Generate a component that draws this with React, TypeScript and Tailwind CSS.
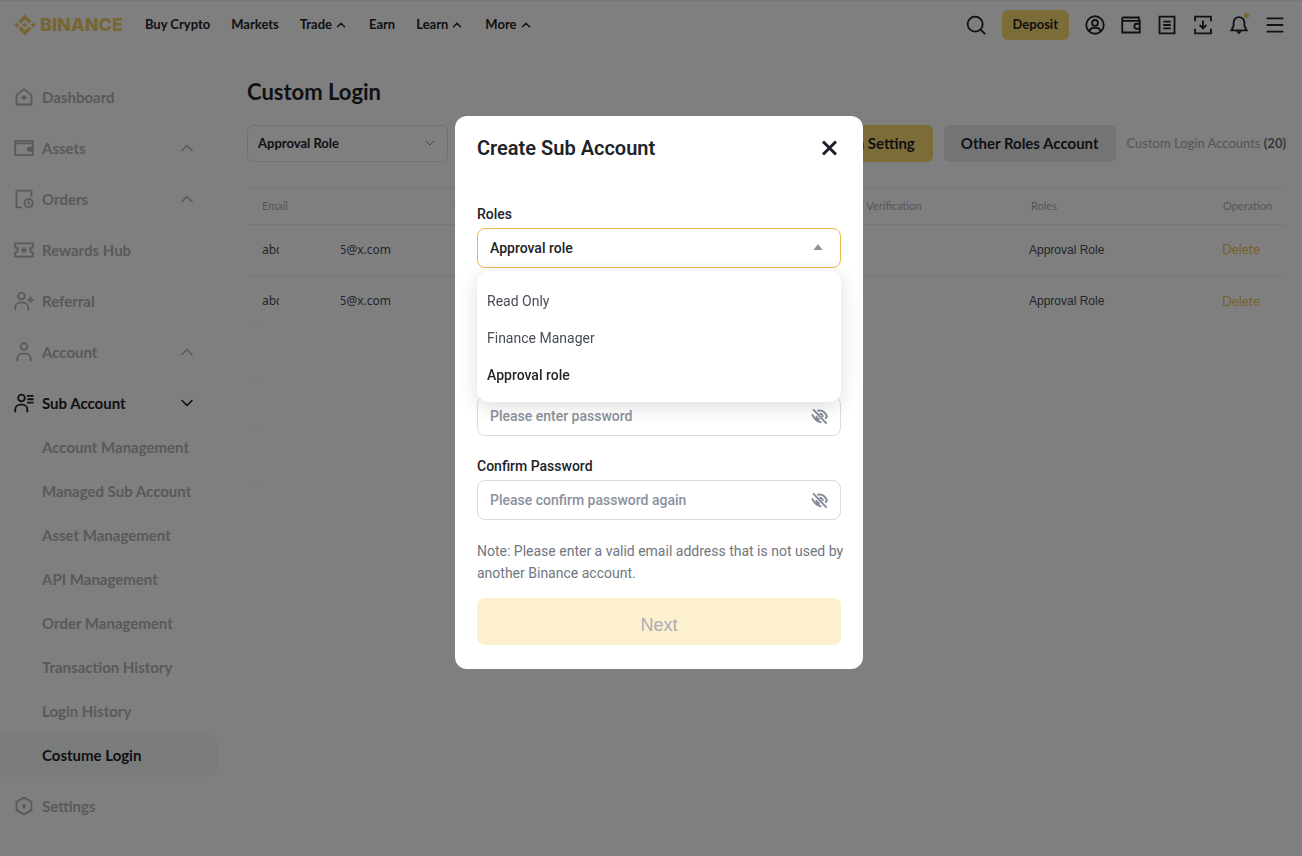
import { useState } from "react";
import type { ReactNode } from "react";
import { ChevronDown, ChevronUp } from "lucide-react";

function Svg({ children, className = "size-5" }: { children: ReactNode; className?: string }) {
  return (
    <svg
      viewBox="0 0 24 24"
      fill="none"
      stroke="currentColor"
      strokeWidth="2.2"
      className={`shrink-0 ${className}`}
      aria-hidden="true"
    >
      {children}
    </svg>
  );
}

const icons = {
  home: (
    <Svg>
      <path d="M3 10l9-7.5L21 10v11H3z" strokeLinejoin="round" />
      <path d="M12 9.500l3.300 3.300-3.300 3.300-3.300-3.300z" fill="currentColor" stroke="none" />
    </Svg>
  ),
  wallet: (
    <Svg>
      <path d="M1.500 3.500h21v17h-21zM1.500 6.500h21" />
      <path d="M22 10.500h-3.500a3 3 0 0 0 0 6H22z" fill="currentColor" stroke="none" />
    </Svg>
  ),
  orders: (
    <Svg>
      <path d="M9.500 22H3V2h18v7.500M3 2v20" />
      <circle cx="17.5" cy="17" r="5" />
      <path d="M17.300 14v3.300l2 1.200" strokeWidth="1.8" />
    </Svg>
  ),
  ticket: (
    <Svg>
      <path d="M1.500 4h21v5a3 3 0 0 0 0 6v5h-21v-5a3 3 0 0 0 0-6z" />
      <path
        d="M12 7.500l1.300 3 3.200.3-2.400 2.100.7 3.100-2.800-1.600-2.800 1.600.7-3.100-2.400-2.100 3.200-.3z"
        fill="currentColor"
        stroke="none"
      />
    </Svg>
  ),
  referral: (
    <Svg>
      <circle cx="9" cy="6" r="4" />
      <path d="M1.500 23v-3a6 6 0 0 1 6-6h3.500a6 6 0 0 1 6 6v3M16 10.500h7.500M19.800 6.800v7.500" />
    </Svg>
  ),
  user: (
    <Svg>
      <circle cx="12" cy="5.500" r="4" />
      <path d="M4 23v-3a6 6 0 0 1 6-6h4a6 6 0 0 1 6 6v3" />
    </Svg>
  ),
  subUser: (
    <Svg>
      <circle cx="9" cy="6" r="4" />
      <path d="M1.500 23v-3a6 6 0 0 1 6-6H10a6 6 0 0 1 6 6v3M15.500 3.500h8M16 7.500h7.500M15.500 11.500h8" />
    </Svg>
  ),
  settings: (
    <Svg>
      <path d="M12 2l9 5v10l-9 5-9-5V7z" strokeLinejoin="round" />
      <path d="M12 9l3 3-3 3-3-3z" fill="currentColor" stroke="none" />
    </Svg>
  ),
};

const menu = [
  { label: "Dashboard", icon: icons.home },
  { label: "Assets", icon: icons.wallet, expandable: true },
  { label: "Orders", icon: icons.orders, expandable: true },
  { label: "Rewards Hub", icon: icons.ticket },
  { label: "Referral", icon: icons.referral },
  { label: "Account", icon: icons.user, expandable: true },
];

const subMenu = [
  "Account Management",
  "Managed Sub Account",
  "Asset Management",
  "API Management",
  "Order Management",
  "Transaction History",
  "Login History",
  "Costume Login",
];

const nav = [
  { label: "Buy Crypto" },
  { label: "Markets" },
  { label: "Trade", arrow: true },
  { label: "Earn" },
  { label: "Learn", arrow: true },
  { label: "More", arrow: true },
];

const roles = ["Read Only", "Finance Manager", "Approval role"];

function Header() {
  return (
    <header className="flex h-[49px] items-center border-t border-[#eaecef] pr-[17px] pl-3.5 text-[#1e2329]">
      <a href="#" className="flex items-center gap-1 text-[#efcd66]">
        <svg viewBox="0 0 24 24" fill="currentColor" className="size-[22px]" aria-hidden="true">
          <path d="M12 .5l7.300 7.300-2.800 2.800L12 6.100l-4.500 4.500-2.800-2.800z" />
          <path d="M12 23.500l7.300-7.300-2.800-2.800-4.500 4.500-4.500-4.500-2.800 2.800z" />
          <path d="M12 9.200l2.800 2.800-2.800 2.800L9.200 12zM2.800 9.200L5.600 12l-2.800 2.800L0 12zM21.200 9.200L24 12l-2.800 2.800-2.800-2.800z" />
        </svg>
        <span className="font-[Inter,sans-serif] text-lg font-extrabold">BINANCE</span>
      </a>
      <nav className="ml-[22px] flex items-center gap-[21px] text-[13px] font-bold">
        {nav.map((item) => (
          <a key={item.label} href="#" className="flex items-center gap-0.5">
            {item.label}
            {item.arrow && <ChevronUp size={14} strokeWidth={2.5} />}
          </a>
        ))}
      </nav>
      <div className="ml-auto flex items-center gap-4">
        <button aria-label="Search">
          <Svg>
            <circle cx="11" cy="11" r="9" />
            <path d="M17.500 17.500L23 23" />
          </Svg>
        </button>
        <button className="h-[30px] rounded-md bg-[#f8d870] px-[11px] text-[13px] font-bold">Deposit</button>
        <button aria-label="Profile">
          <Svg>
            <circle cx="12" cy="12" r="10.500" />
            <circle cx="12" cy="9.500" r="3.500" />
            <path d="M5.500 19.500c.5-3 2-4 4.500-4h4c2.500 0 4 1 4.500 4" />
          </Svg>
        </button>
        <button aria-label="Wallet">
          <Svg>
            <path d="M1.500 3h20v3.500M1.500 3v18h21V7h-21" />
            <path d="M22 10.500h-3a3 3 0 0 0 0 6h3" />
          </Svg>
        </button>
        <button aria-label="Orders">
          <Svg>
            <path d="M3 2h18v20H3zM7.500 8h9M7.500 12h9M7.500 16h9" />
          </Svg>
        </button>
        <button aria-label="Downloads">
          <Svg>
            <path d="M2.500 7.500V2h19v5.500M2.500 16.500V22h19v-5.500M12 6.500v9M8 12l4 4 4-4" />
          </Svg>
        </button>
        <button aria-label="Notifications" className="relative">
          <Svg>
            <path d="M1.500 18.500h21M4 18.500v-3l1.500-2V9a6.500 6.500 0 0 1 13 0v4.500l1.500 2v3" strokeLinejoin="round" />
            <path d="M8.500 19.500h7L12 23z" fill="currentColor" stroke="none" />
          </Svg>
          <span className="absolute -top-0.5 right-0 size-[5px] rounded-full bg-[#efc95a]" />
        </button>
        <button aria-label="Menu">
          <Svg>
            <path d="M2 4h20M2 12h20M2 20h20" />
          </Svg>
        </button>
      </div>
    </header>
  );
}

function Sidebar() {
  const item = "flex h-11 items-center gap-2 pr-[21px] pl-3.5";
  return (
    <aside className="w-[218px] shrink-0 pt-[26px] text-[15px] font-bold text-[#b0b4b6]">
      <ul className="flex flex-col gap-[7px]">
        {menu.map((m) => (
          <li key={m.label}>
            <a href="#" className={item}>
              {m.icon}
              {m.label}
              {m.expandable && <ChevronUp size={20} strokeWidth={2} className="ml-auto" />}
            </a>
          </li>
        ))}
        <li>
          <a href="#" className={`${item} text-[#1e2329]`}>
            {icons.subUser}
            Sub Account
            <ChevronDown size={20} strokeWidth={2} className="ml-auto" />
          </a>
          <ul>
            {subMenu.map((label) => (
              <li key={label}>
                <a
                  href="#"
                  className={`flex h-11 items-center pl-[42px] ${
                    label === "Costume Login" ? "rounded-r-xl bg-[#f4f8f6] text-[#1e2329]" : ""
                  }`}
                >
                  {label}
                </a>
              </li>
            ))}
          </ul>
        </li>
        <li>
          <a href="#" className={item}>
            {icons.settings}
            Settings
          </a>
        </li>
      </ul>
    </aside>
  );
}

function MaskedEmail() {
  return (
    <span className="flex font-['Noto_Sans',sans-serif] whitespace-nowrap text-[#474d57]">
      <span className="w-[17px] overflow-hidden">abc</span>
      <span className="ml-[62px] flex w-[50px] justify-end overflow-hidden">5@x.com</span>
    </span>
  );
}

function Accounts() {
  return (
    <main className="min-w-0 flex-1 pt-[25px] pr-4 pl-[29px] text-[#1e2329]">
      <h1 className="text-[22px] leading-9 font-bold">Custom Login</h1>
      <div className="mt-[15px] flex items-center gap-[11px]">
        <div className="relative w-[201px]">
          <select
            aria-label="Role filter"
            className="h-[37px] w-full appearance-none rounded-md border border-[#dfe2e5] bg-white px-2.5 text-[13px] font-bold"
          >
            <option>Approval Role</option>
          </select>
          <ChevronDown
            size={16}
            strokeWidth={1.5}
            className="pointer-events-none absolute top-2.5 right-2.5 text-[#848e9c]"
          />
        </div>
        <button className="ml-auto h-[37px] rounded-md bg-[#f8d870] px-[18px] text-[15px] font-bold">
          Custom Login Setting
        </button>
        <button className="h-[37px] rounded-md bg-[#e9e9e8] px-[17px] text-[15px] font-bold">
          Other Roles Account
        </button>
        <p className="text-[13px] text-[#a9adaf]">
          Custom Login Accounts <span className="font-bold text-[#6b7075]">(20)</span>
        </p>
      </div>
      <table className="mt-[26px] w-full table-fixed text-left text-xs">
        <thead>
          <tr className="h-9 border-y border-[#eff0f0] text-[11px] text-[#a9adaf]">
            <th className="w-[192px] pl-[15px] font-normal">Email</th>
            <th className="pl-[15px] font-normal">Label</th>
            <th className="w-[193px] pl-[15px] font-normal">Email Verification</th>
            <th className="w-[192px] pl-[15px] font-normal">Roles</th>
            <th className="w-[78px] pl-[15px] font-normal">Operation</th>
          </tr>
        </thead>
        <tbody>
          {[1, 2].map((row) => (
            <tr key={row} className="h-[51px] border-b border-[#eff0f0] last:border-0">
              <td className="pl-[15px]">
                <MaskedEmail />
              </td>
              <td />
              <td />
              <td className="pl-[13px] font-['Liberation_Sans',sans-serif] text-[#474d57]">Approval Role</td>
              <td className="pl-[14px]">
                <button className="text-[13px] text-[#ecc453]">Delete</button>
              </td>
            </tr>
          ))}
        </tbody>
      </table>
      <div className="w-3.5">
        {[1, 2, 3, 4].map((row) => (
          <div key={row} className="h-[51px] border-t border-[#f6f6f6]" />
        ))}
      </div>
    </main>
  );
}

function PasswordField({ id, label, placeholder }: { id: string; label: string; placeholder: string }) {
  const [visible, setVisible] = useState(false);
  return (
    <div>
      <label htmlFor={id} className="mb-1 block leading-5 font-medium">
        {label}
      </label>
      <div className="relative">
        <input
          id={id}
          type={visible ? "text" : "password"}
          placeholder={placeholder}
          className="h-10 w-full rounded-lg border border-[#d8dbdf] px-3 font-medium placeholder:text-[#8b919c]"
        />
        <button
          type="button"
          aria-label="Show password"
          onClick={() => setVisible(!visible)}
          className="absolute top-3 right-[13px] text-[#848b98]"
        >
          <Svg className="size-[17px]">
            <path
              d="M3 2l19 20M1.500 9c2.500 5.500 6.500 10 13 11.500M9 3.800c6-1.300 11 1.700 13.500 8l-2.300 3.400M12 8.200c3-.2 4.800 1.800 4.500 4.800M7.500 11.500c.2 2.700 1.800 4.500 4.800 4.800"
              strokeWidth="2.800"
            />
          </Svg>
        </button>
      </div>
    </div>
  );
}

function CreateSubAccount() {
  const [role, setRole] = useState("Approval role");
  const [open, setOpen] = useState(true);
  return (
    <div
      role="dialog"
      aria-labelledby="dialog-title"
      className="w-[408px] rounded-xl bg-white px-[22px] pt-[18px] pb-6 font-[Roboto,sans-serif] text-sm text-[#1e2329]"
    >
      <div className="flex items-center justify-between">
        <h2 id="dialog-title" className="text-xl leading-7 font-semibold">
          Create Sub Account
        </h2>
        <button aria-label="Close">
          <Svg className="size-6">
            <path d="M6 5.500l13 13M19 5.500l-13 13" strokeWidth="3" />
          </Svg>
        </button>
      </div>
      <form className="mt-[42px] flex flex-col gap-5">
        <div>
          <label htmlFor="roles" className="mb-1 block leading-5 font-medium">
            Roles
          </label>
          <div className="relative">
            <select
              id="roles"
              value={role}
              onChange={(e) => setRole(e.target.value)}
              onClick={() => setOpen(!open)}
              className="h-10 w-full appearance-none rounded-lg border border-[#edb84a] bg-white px-3 font-medium"
            >
              {roles.map((r) => (
                <option key={r}>{r}</option>
              ))}
            </select>
            <svg
              viewBox="0 0 10 6"
              fill="#8b909a"
              className="pointer-events-none absolute top-4 right-[18px] h-1.5 w-2.5"
              aria-hidden="true"
            >
              <path d="M5 0l4.500 6h-9z" />
            </svg>
            {open && (
              <ul className="absolute inset-x-0 top-full z-10 mt-[3px] rounded-xl bg-white pt-[11px] pb-[9px] shadow-[0_4px_20px_rgba(0,0,0,0.14)]">
                {roles.map((r) => (
                  <li key={r}>
                    <button
                      type="button"
                      onClick={() => setRole(r)}
                      className={`h-[37px] w-full px-2.5 text-left ${r === role ? "font-medium" : "text-[#474d57]"}`}
                    >
                      {r}
                    </button>
                  </li>
                ))}
              </ul>
            )}
          </div>
        </div>
        <div>
          <label htmlFor="email" className="mb-1 block leading-5 font-medium">
            Email
          </label>
          <input id="email" type="email" className="h-10 w-full rounded-lg border border-[#d8dbdf] px-3" />
        </div>
        <PasswordField id="password" label="Password" placeholder="Please enter password" />
        <PasswordField id="confirm" label="Confirm Password" placeholder="Please confirm password again" />
        <div>
          <p className="-mr-2 leading-[22px] text-[#707680]">
            Note: Please enter a valid email address that is not used by another Binance account.
          </p>
          <button
            type="button"
            className="mt-3.5 h-[47px] w-full rounded-lg bg-[#fcf1cc] pt-1.5 font-['Liberation_Sans',sans-serif] text-lg text-[#a9adb8]"
          >
            Next
          </button>
        </div>
      </form>
    </div>
  );
}

export default function App() {
  return (
    <div className="min-h-screen bg-white font-[Lato,sans-serif]">
      <Header />
      <div className="flex">
        <Sidebar />
        <Accounts />
      </div>
      <div className="fixed inset-0 flex items-start justify-center bg-black/50 pt-[116px] pl-4">
        <CreateSubAccount />
      </div>
    </div>
  );
}
